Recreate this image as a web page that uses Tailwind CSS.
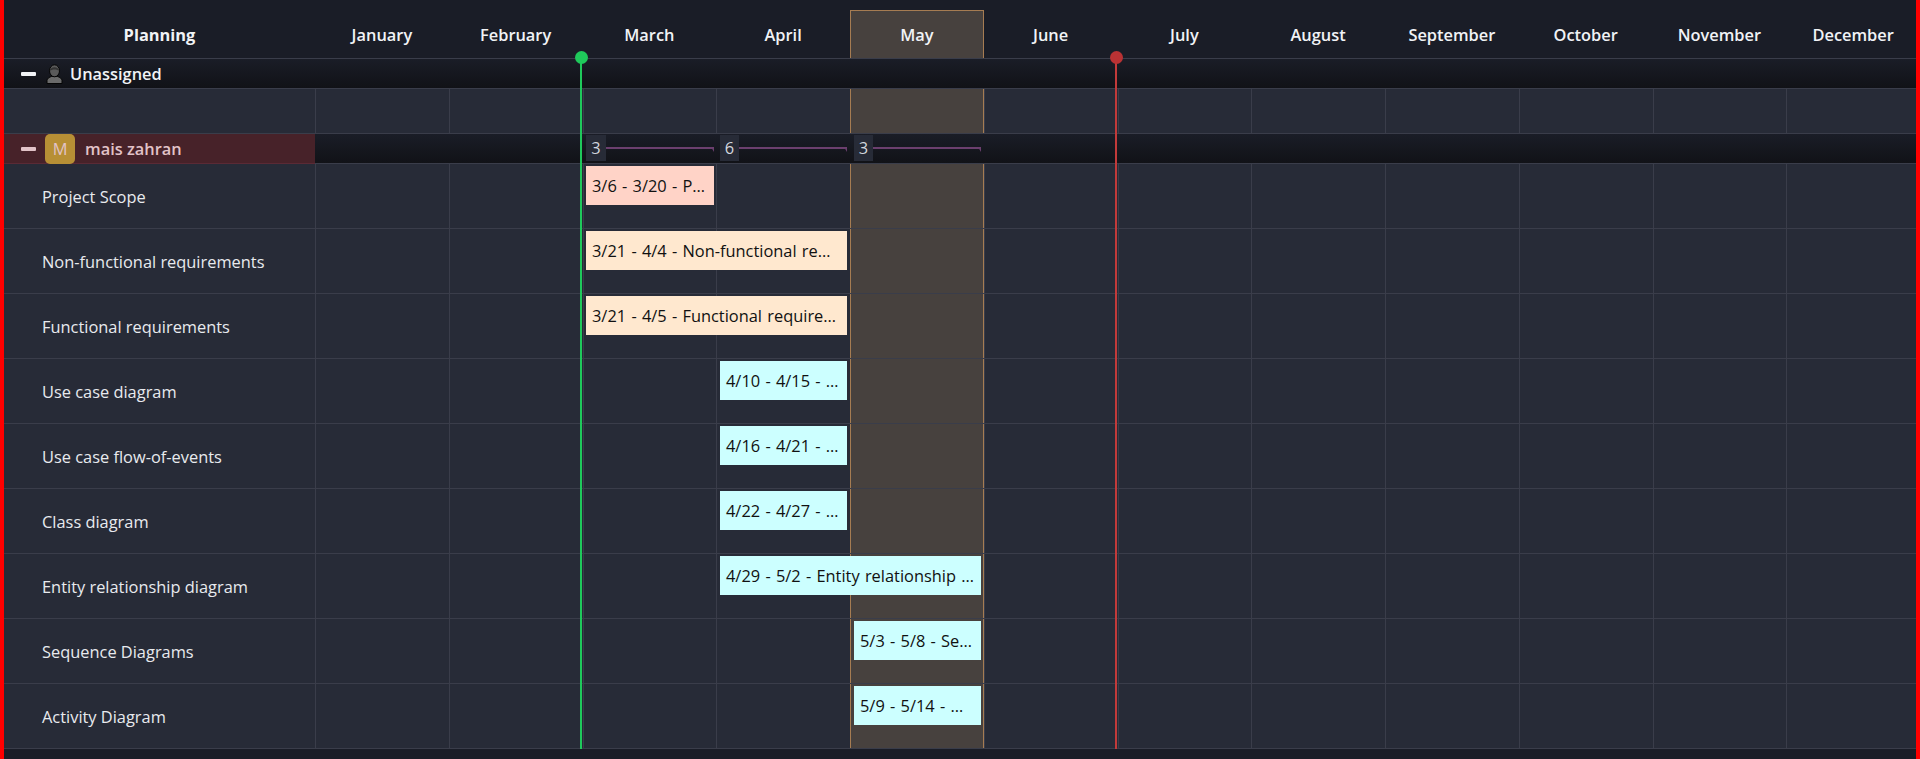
<!DOCTYPE html>
<html lang="en">
<head>
    <meta charset="UTF-8">
    <title>Planning</title>
    <script src="https://cdn.jsdelivr.net/npm/@tailwindcss/browser@4"></script>
</head>
<body class="bg-[#1a1d27] font-['Open_Sans',sans-serif] text-[16.4px] overflow-hidden">
    <div class="relative h-[759px] border-x-4 border-[#ff0000] overflow-hidden">
        <!-- header -->
        <div id="header" class="grid grid-cols-[311px_repeat(12,133.75px)] h-[59px] border-b border-[#3a3d4a] text-[#f1f3f6] font-semibold">
            <div class="flex items-center justify-center pt-[12px] font-bold">Planning</div>
        </div>

        <!-- unassigned -->
        <div class="flex items-center h-[30px] border-b border-[#3a3d4a] bg-gradient-to-b from-[#1a1d27] to-[#111217] pl-[17px] text-[#f1f3f6] font-semibold">
            <span class="w-[15px] h-[4px] bg-[#f1f3f6] rounded-[1px]"></span>
            <svg class="ml-[10px] mr-[7px]" width="17" height="20" viewBox="0 0 17 20">
                <path d="M1 19.5v-3c0-2 2.5-3.500 4.500-4h6c2 .5 4.500 2 4.500 4v3z" fill="#6a6a6a" stroke="#050505"/>
                <ellipse cx="8.500" cy="6.800" rx="5" ry="6" fill="#5a5a5a" stroke="#050505"/>
                <path d="M3.800 7c.2-5 9.200-5 9.400 0-2-2-7.400-2-9.400 0z" fill="#333333"/>
            </svg>
            <span class="pt-[2px]">Unassigned</span>
        </div>

        <!-- empty row under unassigned -->
        <div id="blankRow" class="grid grid-cols-[311px_repeat(12,133.75px)] h-[45px] border-b border-[#3a3d4a] bg-[#272b37]"></div>

        <!-- mais zahran -->
        <div class="relative flex h-[30px] border-b border-[#3a3d4a] bg-gradient-to-b from-[#1a1d27] to-[#111217]">
            <div class="flex items-center w-[311px] h-[30px] pl-[17px] bg-[#472229] border-b border-[#5a2a35] text-[#e2c3c8] font-semibold">
                <span class="w-[15px] h-[4px] bg-[#e2c3c8] rounded-[1px]"></span>
                <span class="flex items-center justify-center w-[30px] h-[30px] ml-[9px] mr-[10px] pt-[1px] rounded-[5px] bg-[#b78f35] font-normal">M</span>
                <span class="pt-[2px]">mais zahran</span>
            </div>
            <div id="counts"></div>
        </div>

        <!-- tasks -->
        <div id="tasks"></div>

        <!-- today / deadline markers -->
        <div class="absolute left-[576px] top-[57px] h-[692px] w-[2px] bg-[#1fc95b]">
            <span class="absolute -left-[5px] -top-[6px] w-[13px] h-[13px] rounded-full bg-[#1fc95b]"></span>
        </div>
        <div class="absolute left-[1111px] top-[57px] h-[692px] w-[2px] bg-[#c23a3a]">
            <span class="absolute -left-[5px] -top-[6px] w-[13px] h-[13px] rounded-full bg-[#b93234]"></span>
        </div>
    </div>

    <script>
        const months = ['January', 'February', 'March', 'April', 'May', 'June', 'July', 'August', 'September', 'October', 'November', 'December'];
        const tasks = [
            { name: 'Project Scope', bar: '3/6 - 3/20 - P…', left: 582, width: 128, color: '#ffd3c7' },
            { name: 'Non-functional requirements', bar: '3/21 - 4/4 - Non-functional re…', left: 582, width: 261, color: '#ffe8cf' },
            { name: 'Functional requirements', bar: '3/21 - 4/5 - Functional require…', left: 582, width: 261, color: '#ffe8cf' },
            { name: 'Use case diagram', bar: '4/10 - 4/15 - …', left: 716, width: 127, color: '#ccffff' },
            { name: 'Use case flow-of-events', bar: '4/16 - 4/21 - …', left: 716, width: 127, color: '#ccffff' },
            { name: 'Class diagram', bar: '4/22 - 4/27 - …', left: 716, width: 127, color: '#ccffff' },
            { name: 'Entity relationship diagram', bar: '4/29 - 5/2 - Entity relationship …', left: 716, width: 261, color: '#ccffff' },
            { name: 'Sequence Diagrams', bar: '5/3 - 5/8 - Se…', left: 850, width: 127, color: '#ccffff' },
            { name: 'Activity Diagram', bar: '5/9 - 5/14 - …', left: 850, width: 127, color: '#ccffff' }
        ];
        const counts = [
            { n: 3, left: 582, pill: 20, end: 710 },
            { n: 6, left: 716, pill: 19, end: 843 },
            { n: 3, left: 850, pill: 19, end: 977 }
        ];

        function cells() {
            return months.map(m => m === 'May'
                ? '<div class="border-x border-[#a67c52] bg-[#47413e]"></div>'
                : '<div class="border-l border-[#3a3d4a]"></div>').join('');
        }

        document.getElementById('header').insertAdjacentHTML('beforeend', months.map(m => m === 'May'
            ? '<div class="flex items-center justify-center mt-[10px] pt-[2px] border-x border-t border-[#a67c52] bg-[#47413e]">May</div>'
            : `<div class="flex items-center justify-center pt-[12px]">${m}</div>`).join(''));

        document.getElementById('blankRow').innerHTML = '<div></div>' + cells();

        document.getElementById('counts').innerHTML = counts.map(c => `
            <span class="absolute top-[1px] h-[26px] pt-[1px] flex items-center justify-center bg-[#272b37] text-[#d3d7de]" style="left:${c.left}px;width:${c.pill}px">${c.n}</span>
            <span class="absolute top-[13px] h-[2px] bg-[#6b3f6e]" style="left:${c.left + c.pill}px;width:${c.end - c.left - c.pill}px"></span>
            <span class="absolute top-[13px] w-[3px] h-[5px] bg-[#6b3f6e] [clip-path:polygon(0_0,100%_0,100%_100%)]" style="left:${c.end - 3}px"></span>`).join('');

        document.getElementById('tasks').innerHTML = tasks.map(t => `
            <div class="relative grid grid-cols-[311px_repeat(12,133.75px)] h-[65px] border-b border-[#3a3d4a] bg-[#272b37]">
                <div class="flex items-center pl-[38px] pt-[2px] text-[#e8eaee]">${t.name}</div>
                ${cells()}
                <div class="absolute top-[2px] h-[39px] leading-[39px] pl-[6px] text-[#111111] [word-spacing:1px] whitespace-nowrap" style="left:${t.left}px;width:${t.width}px;background:${t.color}">${t.bar}</div>
            </div>`).join('');
    </script>
</body>
</html>
